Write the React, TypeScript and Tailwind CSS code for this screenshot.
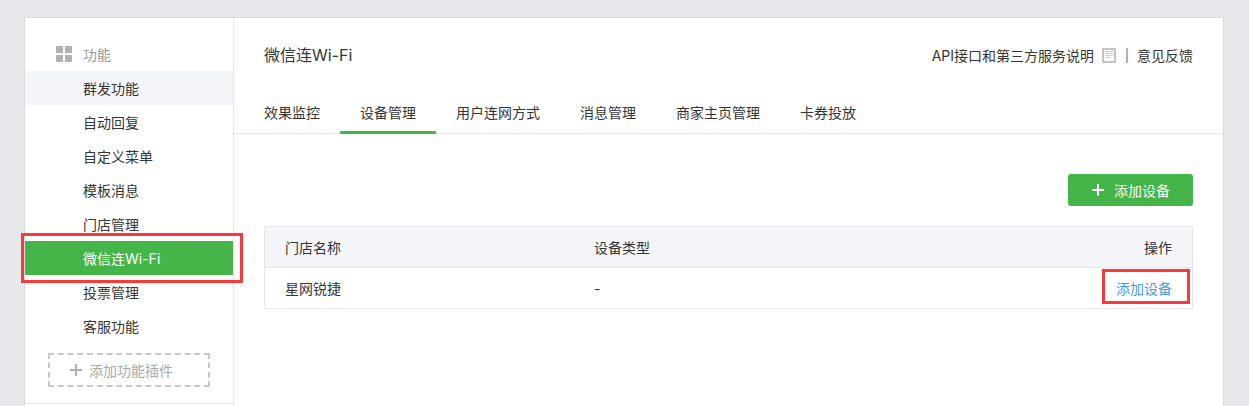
import React from "react";

const font = { fontFamily: 'Inter, "Noto Sans CJK SC", "Liberation Sans", sans-serif' };
const items = ["群发功能", "自动回复", "自定义菜单", "模板消息", "门店管理", "微信连Wi-Fi", "投票管理", "客服功能"];
const tabs = ["效果监控", "设备管理", "用户连网方式", "消息管理", "商家主页管理", "卡券投放"];

export default function App() {
  return (
    <div style={font} className="h-[406px] overflow-hidden bg-[#e7e8eb] px-[24px] pt-[17px] text-[14px] text-[#353535]">
      <div className="flex w-[1200px] h-[420px] border border-[#d9dadc] bg-white">
        <aside className="w-[209px] shrink-0 border-r border-[#e7e7eb] pt-[19px]">
          <div className="flex h-[34px] items-center pl-[31px] text-[#9a9a9a]">
            <div className="grid h-[16px] w-[16px] grid-cols-2 gap-[2px]">
              <span className="bg-[#b2b2b2]" />
              <span className="bg-[#b2b2b2]" />
              <span className="bg-[#b2b2b2]" />
              <span className="bg-[#b2b2b2]" />
            </div>
            <span className="ml-[11px]">功能</span>
          </div>
          <ul>
            {items.map((t, i) => (
              <li
                key={t}
                className={
                  "relative flex h-[34px] w-[208px] items-center pl-[58px] " +
                  (i === 0 ? "bg-[#f4f5f9]" : i === 5 ? "bg-[#44b549] text-white" : "")
                }
              >
                {t}
                {i === 5 && (
                  <span className="absolute left-[-4px] top-[-8px] h-[50px] w-[222px] border-[3px] border-[#f93a3a]" />
                )}
              </li>
            ))}
          </ul>
          <div className="mx-[23px] mt-[10px] flex h-[34px] w-[162px] items-center gap-[6px] border-2 border-dashed border-[#c9c9c9] pl-[19px] text-[#a8a8a8]">
            <svg width="14" height="14" viewBox="0 0 14 14" className="shrink-0">
              <path d="M6 1h2v5h5v2H8v5H6V8H1V6h5z" fill="#b2b2b2" />
            </svg>
            <span>添加功能插件</span>
          </div>
          <div className="mt-[16px] border-t border-[#e7e7eb]" />
        </aside>

        <main className="min-w-0 flex-1">
          <div className="flex items-center justify-between px-[30px] pt-[24px]">
            <h2 className="text-[16px] leading-[26px] font-normal">微信连Wi-Fi</h2>
            <div className="flex items-center">
              <span>API接口和第三方服务说明</span>
              <span className="ml-[8px] flex h-[15px] w-[14px] flex-col gap-px border-2 border-[#c4c4c4] px-[1px] pt-[1px]">
                <span className="h-px bg-[#cfcfcf]" />
                <span className="h-px bg-[#cfcfcf]" />
                <span className="h-px bg-[#cfcfcf]" />
                <span className="h-px w-[6px] bg-[#cfcfcf]" />
              </span>
              <span className="ml-[10px] mr-[9px] h-[15px] w-[2px] bg-[#c4ad9f]" />
              <span>意见反馈</span>
            </div>
          </div>

          <nav className="mt-[16px] flex h-[50px] border-b border-[#e7e7eb] pl-[10px]">
            {tabs.map((t, i) => (
              <div
                key={t}
                className={
                  "flex h-[50px] shrink-0 items-center px-[20px] " +
                  (i === 1 ? "border-b-[3px] border-[#44b549] pt-[9px]" : "pt-[6px]")
                }
              >
                {t}
              </div>
            ))}
          </nav>

          <div className="px-[30px] pt-[40px]">
            <div className="flex justify-end">
              <button className="flex h-[32px] w-[125px] items-center justify-center gap-[9px] rounded-[3px] bg-[#44b549] text-white">
                <svg width="14" height="14" viewBox="0 0 14 14" className="shrink-0">
                  <path d="M6 1h2v5h5v2H8v5H6V8H1V6h5z" fill="#fff" />
                </svg>
                <span>添加设备</span>
              </button>
            </div>

            <div className="mt-[20px] border border-[#e7e7eb]">
              <div className="flex h-[41px] items-center border-b border-[#e7e7eb] bg-[#f4f5f9] px-[20px]">
                <span className="w-[309px]">门店名称</span>
                <span className="flex-1">设备类型</span>
                <span>操作</span>
              </div>
              <div className="flex h-[40px] items-center px-[20px]">
                <span className="w-[309px]">星网锐捷</span>
                <span className="flex-1">-</span>
                <span className="relative text-[#459ae9]">
                  添加设备
                  <span className="absolute left-[-14px] top-[-9px] h-[35px] w-[88px] border-[3px] border-[#f93a3a]" />
                </span>
              </div>
            </div>
          </div>
        </main>
      </div>
    </div>
  );
}
